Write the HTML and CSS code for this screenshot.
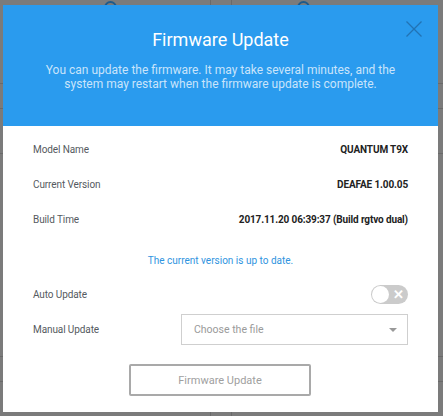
FILE: index.html
```html
<!DOCTYPE html>
<html>
<head>
<meta charset="utf-8">
<link rel="stylesheet" href="styles.css">
</head>
<body>
<div class="backdrop">
  <div class="bg-line l1"></div>
  <div class="bg-line l2"></div>
  <div class="bg-line l3"></div>
  <div class="bg-line l4"></div>
  <div class="bg-line l5"></div>
  <div class="bg-vline v1"></div>
  <div class="bg-vline v2"></div>
  <div class="bg-ring r1"></div>
  <div class="bg-ring r2"></div>
</div>
<div class="modal">
  <div class="header">
    <button class="close" aria-label="Close">
      <svg width="16" height="16" viewBox="0 0 16 16"><path d="M0.5 0.5 L15.5 15.5 M15.5 0.5 L0.5 15.5" stroke="#2173b4" stroke-width="1.3" fill="none"/></svg>
    </button>
    <h1 class="title">Firmware Update</h1>
    <p class="subtitle">You can update the firmware. It may take several minutes, and the system may restart when the firmware update is complete.</p>
  </div>
  <div class="body">
    <div class="row">
      <span class="label">Model Name</span>
      <span class="value">QUANTUM T9X</span>
    </div>
    <div class="row">
      <span class="label">Current Version</span>
      <span class="value">DEAFAE 1.00.05</span>
    </div>
    <div class="row">
      <span class="label">Build Time</span>
      <span class="value">2017.11.20 06:39:37 (Build rgtvo dual)</span>
    </div>
    <p class="status">The current version is up to date.</p>
    <div class="row auto">
      <span class="label">Auto Update</span>
      <span class="toggle"><span class="knob"></span><span class="tx">&#x2715;</span></span>
    </div>
    <div class="row manual">
      <span class="label">Manual Update</span>
      <div class="select">
        <span class="placeholder">Choose the file</span>
        <span class="caret"></span>
      </div>
    </div>
    <div class="actions">
      <button class="btn">Firmware Update</button>
    </div>
  </div>
</div>
</body>
</html>
```
FILE: styles.css
```css
html, body {
  margin: 0;
  padding: 0;
}
body {
  width: 443px;
  height: 416px;
  background: #7b7b7b;
  font-family: Roboto, "Liberation Sans", sans-serif;
  position: relative;
  overflow: hidden;
}
.backdrop {
  position: absolute;
  inset: 0;
}
.bg-line {
  position: absolute;
  left: 0;
  right: 0;
  height: 1px;
  background: #6a6a6a;
}
.l1 { top: 83px; }
.l2 { top: 108px; }
.l3 { top: 153px; }
.l4 { top: 356px; }
.l5 { top: 381px; }
.bg-vline {
  position: absolute;
  top: 0;
  bottom: 0;
  width: 1px;
  background: #6a6a6a;
}
.v1 { left: 210px; }
.v2 { left: 231px; }
.bg-ring {
  position: absolute;
  top: 1px;
  width: 9px;
  height: 9px;
  border: 2px solid #1e5a8a;
  border-radius: 50%;
}
.r1 { left: 104px; }
.r2 { left: 297px; }

.modal {
  position: absolute;
  left: 3px;
  top: 5px;
  width: 435px;
  height: 407px;
  background: #fff;
  display: flex;
  flex-direction: column;
}
.header {
  position: relative;
  background: #2a9bee;
  height: 121px;
  box-sizing: border-box;
  padding-top: 23px;
  text-align: center;
}
.close {
  position: absolute;
  right: 16px;
  top: 16px;
  padding: 0;
  border: 0;
  background: none;
  width: 16px;
  height: 16px;
  line-height: 0;
}
.title {
  margin: 0;
  font-size: 18px;
  font-weight: 400;
  color: #fff;
  line-height: 24px;
}
.subtitle {
  margin: 11px auto 0;
  width: 360px;
  font-size: 12px;
  line-height: 14px;
  color: #c9e4fb;
}
.body {
  padding: 0 30px 0 30px;
}
.row {
  display: flex;
  justify-content: space-between;
  align-items: center;
  height: 35px;
  font-size: 10px;
}
.row:first-child {
  margin-top: 6px;
}
.label {
  color: #555a60;
  letter-spacing: -0.1px;
}
.value {
  color: #222;
  font-weight: 700;
  letter-spacing: -0.13px;
}
.status {
  margin: 16px 0 8px;
  text-align: center;
  color: #2f94e0;
  font-size: 10px;
  line-height: 16px;
}
.toggle {
  position: relative;
  width: 37px;
  height: 19px;
  border-radius: 10px;
  background: #cbcbcb;
}
.knob {
  position: absolute;
  left: 1px;
  top: 1px;
  width: 17px;
  height: 17px;
  border-radius: 50%;
  background: #fff;
}
.tx {
  position: absolute;
  right: 4px;
  top: 1px;
  font-size: 13px;
  line-height: 17px;
  color: #fff;
  font-weight: 700;
}
.select {
  width: 227px;
  height: 31px;
  box-sizing: border-box;
  border: 1px solid #cfcfcf;
  display: flex;
  align-items: center;
  justify-content: space-between;
  padding: 0 10px 0 12px;
}
.placeholder {
  color: #9a9a9a;
  font-size: 10.5px;
}
.caret {
  width: 0;
  height: 0;
  border-left: 4px solid transparent;
  border-right: 4px solid transparent;
  border-top: 4px solid #999;
}
.actions {
  display: flex;
  justify-content: center;
  margin-top: 17px;
}
.btn {
  width: 182px;
  height: 32px;
  background: #fff;
  border: 2px solid #a9a9a9;
  border-radius: 2px;
  color: #a0a0a0;
  font-family: Roboto, "Liberation Sans", sans-serif;
  font-size: 11px;
  margin-left: -1px;
}
```
